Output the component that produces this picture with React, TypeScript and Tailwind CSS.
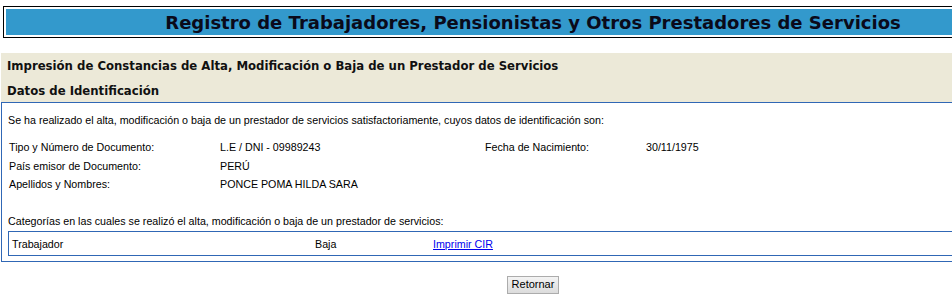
export default function App() {
  const rows = [
    ['Tipo y Número de Documento:', 'L.E / DNI - 09989243', 'Fecha de Nacimiento:', '30/11/1975'],
    ['País emisor de Documento:', 'PERÚ', '', ''],
    ['Apellidos y Nombres:', 'PONCE POMA HILDA SARA', '', ''],
  ];

  return (
    <div className="w-[952px] h-[306px] overflow-hidden bg-white text-black font-['Liberation_Sans',Arial,sans-serif]">
      <div className="w-[1066px]">
        {/* header */}
        <div className="pt-[6px] pl-[3px]">
          <div className="w-[1060px] border border-black p-[2px]">
            <div className="h-[26px] bg-[#3399CC] flex items-center justify-center">
              <h1 className="font-['DejaVu_Sans',sans-serif] font-bold text-[18px] text-[#0a0a1a]">
                Registro de Trabajadores, Pensionistas y Otros Prestadores de Servicios
              </h1>
            </div>
          </div>
        </div>

        {/* panel */}
        <div className="mt-[15px] ml-[1px]">
          <div className="h-[50px] bg-[#ECE9D8] border-b border-[#3067B5] px-[6px] font-['DejaVu_Sans_Condensed','DejaVu_Sans',sans-serif] font-bold text-[13px] text-[#111]">
            <div className="h-[26px] pt-[5px] leading-[16px]">
              Impresión de Constancias de Alta, Modificación o Baja de un Prestador de Servicios
            </div>
            <div className="leading-[16px] pt-[4px]">Datos de Identificación</div>
          </div>

          <div className="border-l border-b border-[#3067B5] px-[6px] pt-[10px] pb-[5px] text-[10.7px]">
            <p className="h-[14px] leading-[14px]">
              Se ha realizado el alta, modificación o baja de un prestador de servicios satisfactoriamente, cuyos datos de identificación son:
            </p>

            <div className="mt-[11px]">
              {rows.map((r, i) => (
                <div key={i} className="grid grid-cols-[211px_265px_161px_1fr] h-[18.5px] items-center pl-[1px]">
                  <span>{r[0]}</span>
                  <span>{r[1]}</span>
                  <span>{r[2]}</span>
                  <span>{r[3]}</span>
                </div>
              ))}
            </div>

            <p className="mt-[20px] h-[14px] leading-[14px]">
              Categorías en las cuales se realizó el alta, modificación o baja de un prestador de servicios:
            </p>

            <div className="mt-[3px] h-[25px] border border-[#3067B5] flex items-center pl-[3px] pt-[2px]">
              <span className="w-[303px]">Trabajador</span>
              <span className="w-[118px]">Baja</span>
              <a href="#" className="text-[#0000EE] underline">Imprimir CIR</a>
            </div>
          </div>

          <div className="flex justify-center mt-[14px] pr-[1px]">
            <button className="w-[52px] h-[18px] border border-[#ACACAC] bg-gradient-to-b from-[#F4F4F4] to-[#DCDCDC] text-[11px] leading-none text-black">
              Retornar
            </button>
          </div>
        </div>
      </div>
    </div>
  );
}
